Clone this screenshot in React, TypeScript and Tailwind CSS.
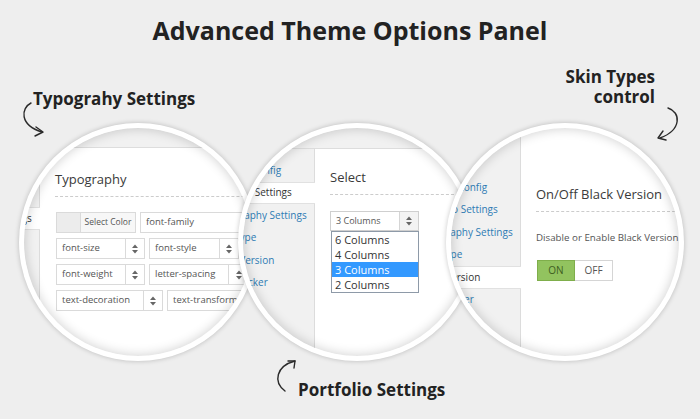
const MENU = [
  "General Config",
  "Portfolio Settings",
  "Typography Settings",
  "Skin Type",
  "Black Version",
  "Color Picker",
];

function UpDown() {
  return (
    <svg width="6" height="10" viewBox="0 0 6 10" className="fill-[#666]">
      <polygon points="0,4 3,0.5 6,4" />
      <polygon points="0,6 3,9.5 6,6" />
    </svg>
  );
}

function Sidebar({ active, top }: { active: number; top: string }) {
  return (
    <div className={`w-[150px] shrink-0 bg-[#f1f1f1] border-r border-[#dcdcdc] flex flex-col ${top}`}>
      {MENU.map((item, i) =>
        i === active ? (
          <div
            key={item}
            className="h-[22.5px] -mr-px bg-white border-y border-[#e1e1e1] flex items-center pl-[47px] text-[10px] text-[#333] whitespace-nowrap"
          >
            {item}
          </div>
        ) : (
          <div
            key={item}
            className="h-[22.5px] flex items-center pl-[47px] text-[10px] text-[#2e7bb4] whitespace-nowrap"
          >
            {item}
          </div>
        )
      )}
    </div>
  );
}

function Heading({ children }: { children: React.ReactNode }) {
  return (
    <div className="text-[13px] leading-[18px] text-[#3a3a3a] pb-[8px] border-b border-dashed border-[#cccccc] whitespace-nowrap">
      {children}
    </div>
  );
}

function SelectBox({ label, w, arrowAt }: { label: string; w: string; arrowAt: string }) {
  return (
    <div className={`h-[21px] ${w} shrink-0 flex border border-[#dadada] bg-white text-[9.5px] text-[#555]`}>
      <div className={`${arrowAt} shrink-0 flex items-center pl-[5px] whitespace-nowrap`}>{label}</div>
      <div className="flex-1 border-l border-[#dadada] flex items-center justify-center">
        <UpDown />
      </div>
    </div>
  );
}

function Lens({ children }: { children: React.ReactNode }) {
  return (
    <div className="relative isolate w-[238px] h-[238px] shrink-0 rounded-full bg-white p-[5px] shadow-[0_0_5px_rgba(0,0,0,0.22)]">
      <div className="relative w-full h-full rounded-full overflow-hidden bg-[#f1f1f1]">
        {children}
        <div className="absolute inset-0 rounded-full shadow-[inset_0_0_12px_rgba(0,0,0,0.2)] pointer-events-none" />
      </div>
    </div>
  );
}

function TypographyLens() {
  return (
    <Lens>
      <div className="-ml-[134px] w-[420px] flex flex-col">
        <div className="h-[20px] bg-[#f1f1f1] border-b border-[#dddddd]" />
        <div className="flex h-[230px]">
          <Sidebar active={2} top="pt-[14px]" />
          <div className="flex-1 bg-white pl-[15px] pt-[22px]">
            <Heading>Typography</Heading>
            <div className="mt-[15px] pl-px flex flex-col gap-[5px]">
              <div className="flex gap-[4px]">
                <div className="h-[21px] flex border border-[#dadada] text-[8.5px] text-[#555]">
                  <div className="w-[23px] bg-[#ececec]" />
                  <div className="w-[55px] border-l border-[#dadada] bg-[#f7f7f7] flex items-center justify-center whitespace-nowrap">
                    Select Color
                  </div>
                </div>
                <div className="h-[21px] w-[150px] border border-[#dadada] bg-white flex items-center pl-[5px] text-[9.5px] text-[#555]">
                  font-family
                </div>
              </div>
              <div className="flex gap-[4px]">
                <SelectBox label="font-size" w="w-[89px]" arrowAt="w-[68px]" />
                <SelectBox label="font-style" w="w-[90px]" arrowAt="w-[69px]" />
              </div>
              <div className="flex gap-[4px]">
                <SelectBox label="font-weight" w="w-[89px]" arrowAt="w-[68px]" />
                <SelectBox label="letter-spacing" w="w-[100px]" arrowAt="w-[78px]" />
              </div>
              <div className="flex gap-[4px]">
                <SelectBox label="text-decoration" w="w-[107px]" arrowAt="w-[86px]" />
                <SelectBox label="text-transform" w="w-[110px]" arrowAt="w-[89px]" />
              </div>
            </div>
          </div>
        </div>
      </div>
    </Lens>
  );
}

function PortfolioLens() {
  return (
    <Lens>
      <div className="-ml-[78px] w-[420px] flex flex-col">
        <div className="h-[21px] bg-[#f1f1f1] border-b border-[#dddddd]" />
        <div className="flex h-[230px]">
          <Sidebar active={1} top="pt-[10px]" />
          <div className="flex-1 bg-white pl-[15px] pt-[19px]">
            <Heading>Select</Heading>
            <div className="mt-[16px] w-[89px]">
              <div className="h-[20px] flex border border-[#cfcfcf] bg-white text-[9px] text-[#555]">
                <div className="w-[68px] flex items-center pl-[5px]">3 Columns</div>
                <div className="flex-1 border-l border-[#d5d5d5] bg-[#f3f3f3] flex items-center justify-center">
                  <UpDown />
                </div>
              </div>
              <div className="ml-px w-[88px] border border-[#8e9aa8] bg-white text-[11px] leading-[15px] text-[#333]">
                <div className="pl-[3px]">6 Columns</div>
                <div className="pl-[3px]">4 Columns</div>
                <div className="pl-[3px] bg-[#3399ff] text-white">3 Columns</div>
                <div className="pl-[3px]">2 Columns</div>
              </div>
            </div>
          </div>
        </div>
      </div>
    </Lens>
  );
}

function SkinLens() {
  return (
    <Lens>
      <div className="-ml-[80px] w-[420px] flex h-[230px]">
        <Sidebar active={4} top="pt-[48px]" />
        <div className="flex-1 bg-white pl-[15px] pt-[57px]">
          <Heading>On/Off Black Version</Heading>
          <div className="mt-[19px] text-[9.75px] leading-[13px] text-[#555] whitespace-nowrap">
            Disable or Enable Black Version
          </div>
          <div className="mt-[16px] ml-px flex h-[21px] text-[10px]">
            <div className="w-[38px] bg-[#92c35f] border border-[#7fae4b] flex items-center justify-center text-[#3f5f22]">
              ON
            </div>
            <div className="w-[38px] bg-white border border-l-0 border-[#d5d5d5] flex items-center justify-center text-[#555]">
              OFF
            </div>
          </div>
        </div>
      </div>
    </Lens>
  );
}

export default function App() {
  return (
    <div className="relative w-[700px] h-[419px] overflow-hidden bg-[#eeeeee] font-['Open_Sans',sans-serif]">
      <h1 className="pt-[14px] text-center text-[25px] leading-[32px] font-bold text-[#222]">
        Advanced Theme Options Panel
      </h1>

      <div className="mt-[21px] flex items-end justify-between pl-[33px] pr-[45px] text-[17px] leading-[20px] font-bold text-[#222]">
        <div>Typograhy Settings</div>
        <div className="mb-[2px] text-right">
          Skin Types
          <br />
          control
        </div>
      </div>

      <div className="mt-[14px] flex pl-[19px]">
        <TypographyLens />
        <div className="-ml-[19px]">
          <PortfolioLens />
        </div>
        <div className="-ml-[30px]">
          <SkinLens />
        </div>
      </div>

      <div className="mt-[19px] pl-[298px] text-[17px] leading-[20px] font-bold text-[#222]">
        Portfolio Settings
      </div>

      <svg
        className="absolute inset-0 pointer-events-none"
        width="700"
        height="419"
        fill="none"
        stroke="#2a2a2a"
        strokeWidth="1.4"
        strokeLinecap="round"
        strokeLinejoin="round"
      >
        <path d="M31 103 C21 108 19 125 42 132" />
        <path d="M36 127 L43 132 L35 136" />
        <path d="M668 108 C681 112 682 130 660 138" />
        <path d="M663 131 L658 138 L666 140" />
        <path d="M285 391 C273 382 276 366 295 361" />
        <path d="M288 361 L295 361 L294 368" />
      </svg>
    </div>
  );
}
